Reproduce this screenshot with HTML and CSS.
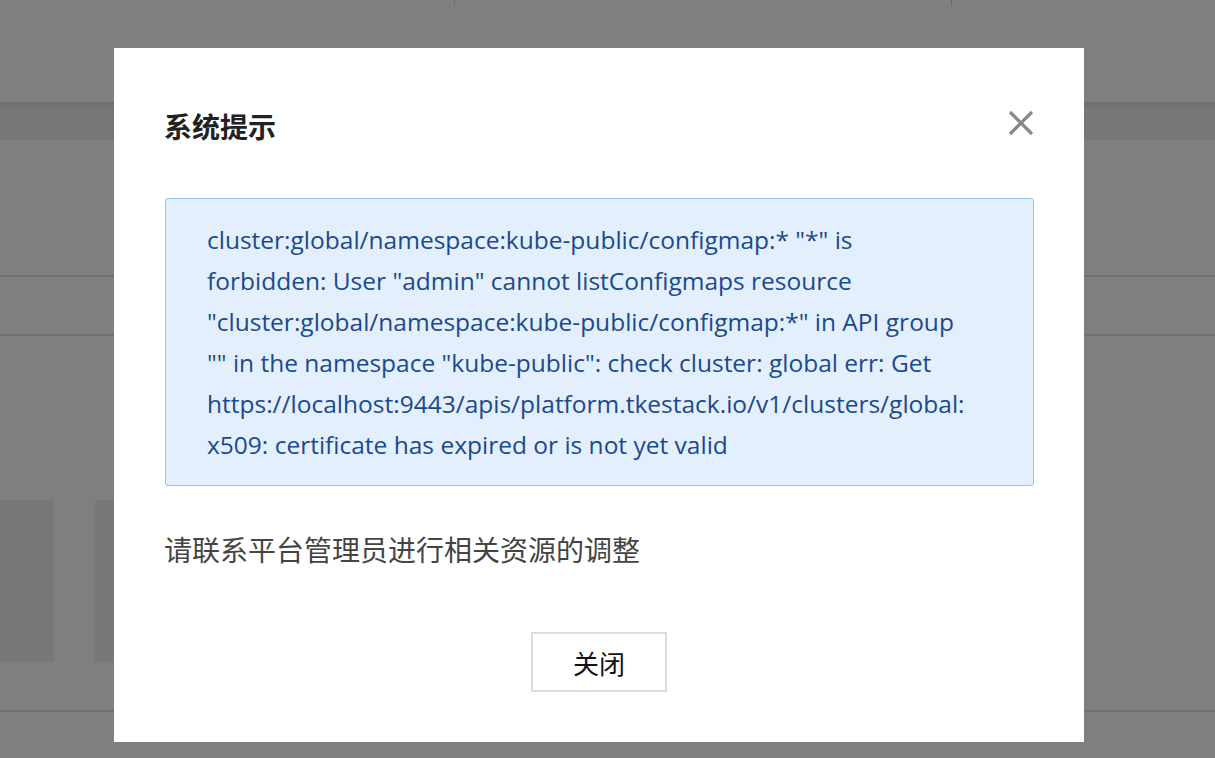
FILE: index.html
```html
<!DOCTYPE html>
<html lang="zh-CN">
<head>
<meta charset="utf-8">
<title>系统提示</title>
<link rel="stylesheet" href="styles.css">
</head>
<body>
<div class="page">
  <header class="topbar">
    <div class="tab"></div>
    <div class="tab"></div>
    <div class="tab last"></div>
  </header>
  <div class="subbar"></div>
  <div class="filter"></div>
  <div class="toolbar"></div>
  <div class="content">
    <div class="cards">
      <div class="card small"></div>
      <div class="card"></div>
    </div>
  </div>
  <div class="footer"></div>
</div>

<div class="mask">
  <div class="dialog">
    <div class="dialog-head">
      <h2 class="dialog-title">系统提示</h2>
      <button class="dialog-close" aria-label="关闭">
        <svg width="26" height="26" viewBox="0 0 26 26"><path d="M2 2 L24 24 M24 2 L2 24" stroke="#888" stroke-width="3.2" fill="none"/></svg>
      </button>
    </div>
    <div class="alert">cluster:global/namespace:kube-public/configmap:* "*" is<br>forbidden: User "admin" cannot listConfigmaps resource<br>"cluster:global/namespace:kube-public/configmap:*" in API group<br>"" in the namespace "kube-public": check cluster: global err: Get<br>https://localhost:9443/apis/platform.tkestack.io/v1/clusters/global:<br>x509: certificate has expired or is not yet valid</div>
    <p class="dialog-text">请联系平台管理员进行相关资源的调整</p>
    <div class="dialog-foot">
      <button class="btn">关闭</button>
    </div>
  </div>
</div>
</body>
</html>
```

FILE: styles.css
```css
* { box-sizing: border-box; }
html, body { margin: 0; padding: 0; }
body {
  width: 1215px;
  height: 758px;
  overflow: hidden;
  position: relative;
  font-family: "Noto Sans", "Noto Sans CJK SC", sans-serif;
  background: #ffffff;
}
.page {
  height: 758px;
  display: flex;
  flex-direction: column;
  background: #ffffff;
}
.topbar {
  height: 102px;
  display: flex;
  background: #ffffff;
  box-shadow: 0 2px 6px rgba(0,0,0,0.12);
  position: relative;
  z-index: 1;
}
.tab {
  width: 455px;
  height: 6px;
  border-right: 1px solid #d6d6d6;
}
.tab:nth-child(2) { width: 497px; }
.tab.last { border-right: 0; flex: 1; }
.subbar {
  height: 38px;
  background: #ececec;
}
.filter {
  height: 137px;
  background: #ffffff;
  border-bottom: 2px solid #e0e0e0;
}
.toolbar {
  height: 59px;
  background: #ffffff;
  border-bottom: 2px solid #e0e0e0;
}
.content {
  height: 376px;
  background: #ffffff;
  border-bottom: 2px solid #e0e0e0;
  padding-top: 164px;
}
.cards {
  display: flex;
  gap: 41px;
  height: 162px;
}
.card {
  width: 300px;
  background: #f1f1f1;
}
.card.small { width: 54px; }
.footer { flex: 1; background: #ffffff; }

.mask {
  position: absolute;
  inset: 0;
  background: rgba(0,0,0,0.5);
  z-index: 10;
  padding: 48px 0 0 114px;
}
.dialog {
  width: 970px;
  height: 694px;
  background: #ffffff;
  padding: 60px 50px 50px 50px;
  display: flex;
  flex-direction: column;
}
.dialog-head {
  display: flex;
  align-items: center;
  justify-content: space-between;
  height: 36px;
}
.dialog-title {
  margin: 0;
  font-family: "Noto Sans CJK SC", sans-serif;
  font-size: 28px;
  font-weight: 700;
  line-height: 36px;
  color: #222;
}
.dialog-close {
  width: 26px;
  height: 26px;
  margin-top: -6px;
  padding: 0;
  border: 0;
  background: none;
  display: flex;
}
.alert {
  margin-top: 54px;
  margin-left: 1px;
  border: 1px solid #94c3f5;
  border-radius: 3px;
  background: #e3effd;
  padding: 20px 20px 20px 41px;
  color: #1b4a8b;
  font-family: "Open Sans", "Noto Sans CJK SC", sans-serif;
  font-size: 24.5px;
  line-height: 41px;
  white-space: nowrap;
}
.dialog-text {
  margin: 43px 0 0;
  font-family: "Noto Sans CJK SC", sans-serif;
  font-size: 28px;
  line-height: 40px;
  color: #444;
}
.dialog-foot {
  margin-top: 63px;
  display: flex;
  justify-content: center;
}
.btn {
  width: 136px;
  height: 60px;
  border: 2px solid #dcdcdc;
  background: #fff;
  font-family: "Noto Sans CJK SC", sans-serif;
  font-size: 26px;
  color: #111;
  padding: 0;
}
```
